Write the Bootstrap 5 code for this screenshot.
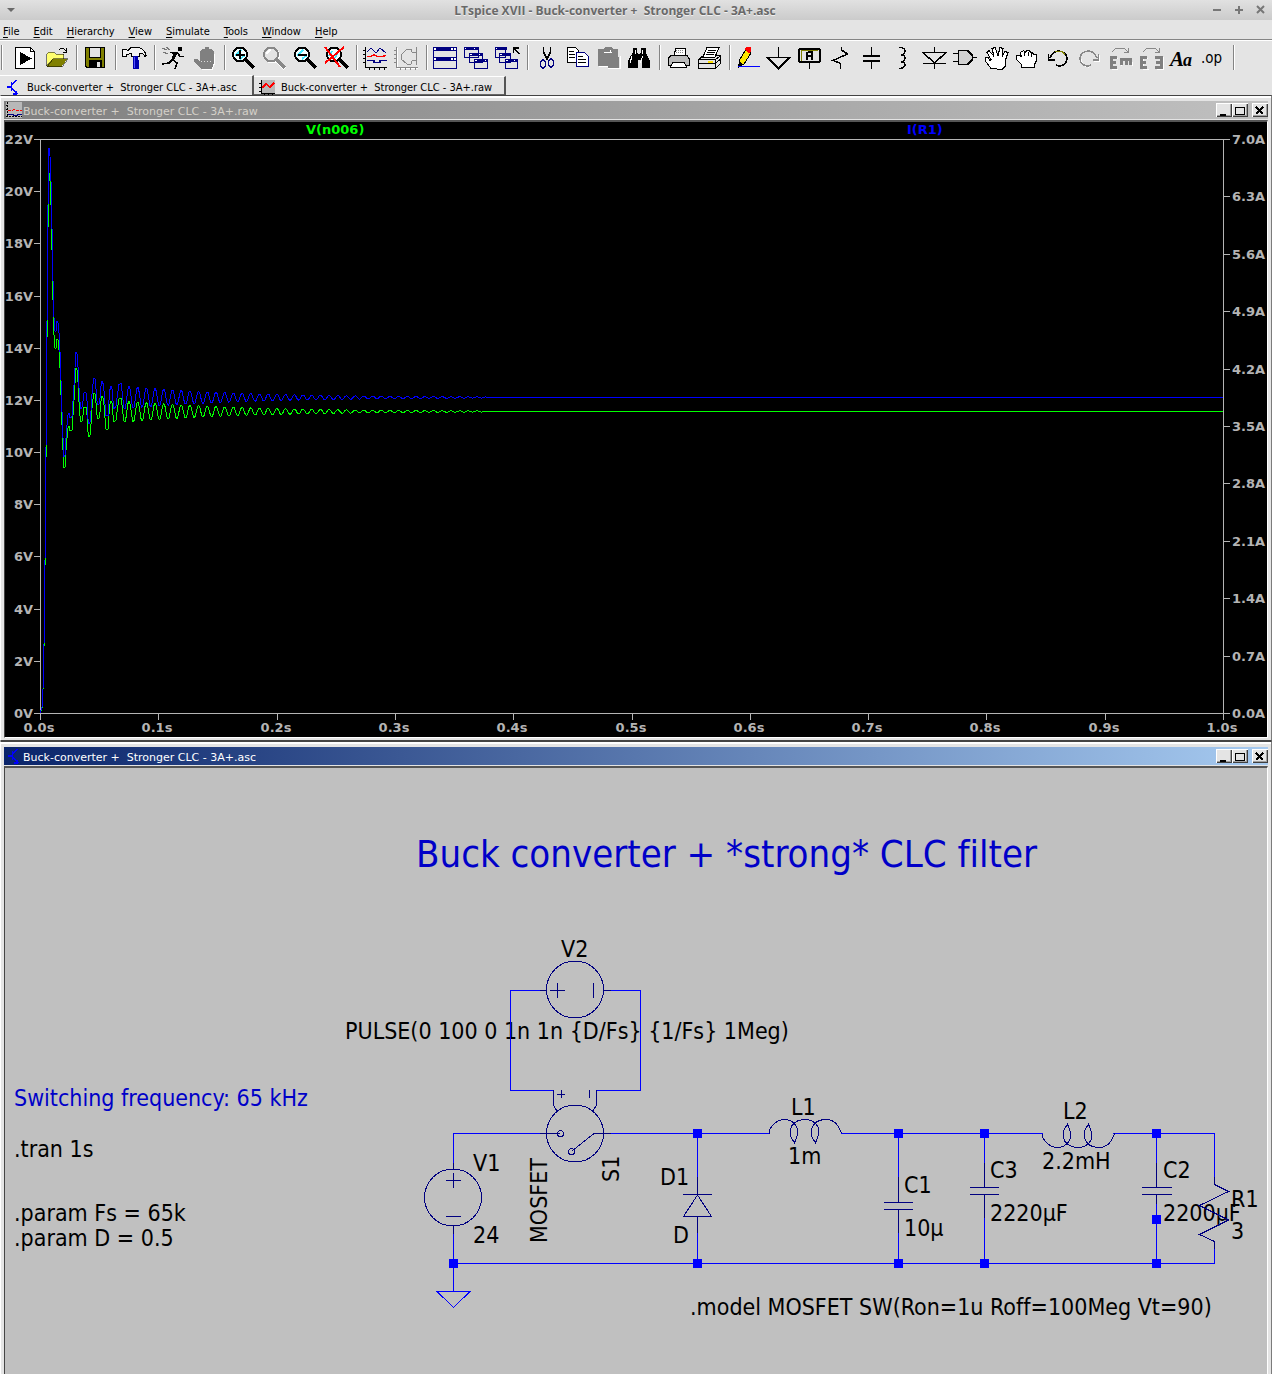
<!DOCTYPE html>
<html lang="en">
<head>
<meta charset="utf-8">
<meta name="viewport" content="width=device-width, initial-scale=1">
<title>LTspice XVII - Buck-converter + Stronger CLC - 3A+.asc</title>
<link rel="stylesheet" href="https://cdn.jsdelivr.net/npm/bootstrap@5.3.0/dist/css/bootstrap.min.css">
<style>
body{background:#e4e4e4;font-family:"DejaVu Sans Condensed","DejaVu Sans",sans-serif;font-size:11px;line-height:15px;color:#000;overflow-x:hidden}
button{border:0;background:none;padding:0;color:inherit}
.app-title{height:20px;padding-right:6px;background:linear-gradient(#e1e1e1,#cbcbcb);color:#696969;font:bold 12px/19px "Open Sans","Noto Sans",sans-serif;text-shadow:0 1px #f0f0f0}
.keep{white-space:pre}
.win-ctl{width:22px;height:19px;line-height:0}
.menu-line{height:19px;padding-left:3px;gap:14px}
.menu-line a{color:#000;text-decoration:none;line-height:23px}
.menu-line u{text-underline-offset:2px}
.tool-line{height:36px;border-top:1px solid #848484;box-shadow:inset 0 1px #fff;padding-left:1px}
.tool-line button{width:31px;height:35px;padding:6px 4px 5px 3px;line-height:0;flex:none}
.tool-line svg{width:24px;height:24px;shape-rendering:crispEdges;overflow:visible}
.tool-rule{width:8px;flex:none}
.tool-rule::before{content:"";display:block;width:2px;height:25px;margin:5px 0 0 4px;background:#848484;border-right:1px solid #fff}
.grip{width:9px}
.grip::before{margin-left:0}
.tab-line{height:20px}
.doc-tab{height:19px;padding:3px 0 0 5px;border-top:1px solid #fff;border-right:2px solid #555;display:flex;align-items:center;gap:6px}
.doc-tab.current{height:20px;width:254px}
.doc-tab.other{width:252px;margin-top:1px;box-shadow:inset 0 -1px #666}
.doc-tab svg{width:16px;height:16px;shape-rendering:crispEdges;flex:none}
.mdi{border:1px solid #fff;border-top-color:#444;border-right-color:#7b7b7b;border-bottom:1px solid #444;box-shadow:inset 0 2px #fff;padding:5px 3px 2px 3px}
.mdi-head{height:18px;padding-left:2px;font:11px/19px "DejaVu Sans",sans-serif}
.mdi-head span{padding:2px 0 0 1px}
.head-off{background:linear-gradient(90deg,#808080,#c0c0c0);color:#d4d0c8}
.head-on{background:linear-gradient(90deg,#0a246a,#a6caf0);color:#fff}
.mdi-head svg{width:16px;height:16px;shape-rendering:crispEdges}
.cap-btn{width:16px;height:14px;background:#e4e4e4!important;box-shadow:inset 1px 1px #fff,inset -1px -1px #404040,inset -2px -2px #a0a0a0;line-height:0}
.mdi-body{border:1px solid #fff;border-top:2px solid #555;border-left:1px solid #444;line-height:0;margin-top:1px}
.mdi-body svg{display:block;width:100%;height:auto}
.plot{background:#000;font:bold 13px "DejaVu Sans",sans-serif;fill:#b4b4b4}
.axis{stroke:#b4b4b4;fill:none;shape-rendering:crispEdges}
.trace{fill:none;stroke-width:1;shape-rendering:crispEdges}
.sheet{background:#c0c0c0;font-size:23px;font-variant-ligatures:none;fill:#000}
.wire{stroke:#0000ff;fill:none;shape-rendering:crispEdges}
.part{stroke:#000080;fill:none;shape-rendering:crispEdges}
.remark{fill:#0000c8}
.headline{font-size:38px}
</style>
</head>
<body class="d-flex flex-column min-vh-100">
<header>
<div class="app-title d-flex align-items-center">
<button class="win-ctl" aria-label="Window menu"><svg width="22" height="19"><path d="M7 7h8l-4 4z" fill="#696969"/></svg></button>
<div class="flex-grow-1 text-center keep ps-2">LTspice XVII - Buck-converter +  Stronger CLC - 3A+.asc</div>
<button class="win-ctl" aria-label="Minimize"><svg width="22" height="19"><path d="M13 9h8" stroke="#777" stroke-width="2"/></svg></button>
<button class="win-ctl" aria-label="Maximize"><svg width="22" height="19"><path d="M13 9h8M17 5v8" stroke="#777" stroke-width="2"/></svg></button>
<button class="win-ctl" aria-label="Close"><svg width="22" height="19"><path d="M13 5l7 7M20 5l-7 7" stroke="#777" stroke-width="2"/></svg></button>
</div>
<nav class="menu-line d-flex">
<a href="#"><u>F</u>ile</a><a href="#"><u>E</u>dit</a><a href="#"><u>H</u>ierarchy</a><a href="#"><u>V</u>iew</a><a href="#"><u>S</u>imulate</a><a href="#"><u>T</u>ools</a><a href="#"><u>W</u>indow</a><a href="#"><u>H</u>elp</a>
</nav>
<div class="tool-line d-flex" role="toolbar" aria-label="Main toolbar">
<span class="tool-rule grip"></span>
<button aria-label="Run"><svg viewBox="0 0 24 24"><path d="M2.500 1.500h15l4 4v17h-19z" fill="#fff" stroke="#000"/><path d="M17.500 1.500v4h4" fill="none" stroke="#000"/><path d="M7 6l12 6.500L7 19z"/></svg></button>
<button aria-label="Open"><svg viewBox="0 0 24 24"><path d="M2.500 20V8l2-2h5l2 2h8v5H9z" fill="#ffff70" stroke="#000" stroke-width=".5"/><path d="M2.500 20.500l6-8h15l-6 8z" fill="#808000" stroke="#000" stroke-width=".5"/><path d="M15 4q3-4 7 1M22.500 2v4h-4" fill="none" stroke="#000"/></svg></button>
<span class="tool-rule"></span>
<button aria-label="Save"><svg viewBox="0 0 24 24"><path d="M2.500 1.500h19v20H4l-1.500-1.500z" fill="#808000" stroke="#000"/><path d="M6.500 1.500h11v10h-11z" fill="#e4e4e4" stroke="#000"/><path d="M6 14h13v8H6z"/><path d="M14 16h3v5h-3z" fill="#e4e4e4"/></svg></button>
<span class="tool-rule"></span>
<button aria-label="Control panel"><svg viewBox="0 0 24 24"><path d="M.5 3.500H4l2 1 3-3h8q6 2 7 8l-1 1q-2-4-5-3l-1 3h-7l-1-3-4 1-1 2h-3z" fill="#f4f4f4" stroke="#000"/><path d="M11 10h5v3l1 2v8h-6z" fill="#0000b0"/><path d="M12.500 11v11" stroke="#55f"/></svg></button>
<span class="tool-rule"></span>
<button aria-label="Simulate"><svg viewBox="0 0 24 24"><path d="M17 1h4v4h-4z"/><path d="M9 6.500l8 1 2 3h4M16 6l-4 8 4 3-2 6M12 13l-4 4-7 1" fill="none" stroke="#000" stroke-width="1.500"/><path d="M15 6l-3 6" stroke="#000" stroke-width="3"/><path d="M1 2l5 2M2 6l5 2M5 1l4 3" stroke="#777"/></svg></button>
<button aria-label="Halt"><svg viewBox="0 0 24 24"><path d="M2 13h3l3 3V5l2-2h3V1h4v2h3l2 3v12l-2 5H10l-8-7z" fill="#808080"/><path d="M9 15.500h10" stroke="#ddd" stroke-dasharray="1 2"/><path d="M10 23.500h10l2-5V8" fill="none" stroke="#fff"/></svg></button>
<span class="tool-rule"></span>
<button aria-label="Zoom in"><svg viewBox="0 0 24 24"><circle cx="9" cy="8.500" r="7" fill="#f4ffff" stroke="#000" stroke-width="2"/><path d="M4 10l6-6M9 13l5-4" stroke="#40e8ff" stroke-width="2"/><path d="M4.500 8.500h9M9 4v9" stroke="#000" stroke-width="2"/><path d="M15 14l8 8" stroke="#000" stroke-width="3"/></svg></button>
<button aria-label="Pan"><svg viewBox="0 0 24 24"><circle cx="10" cy="9.500" r="7" fill="none" stroke="#fff" stroke-width="2"/><circle cx="9" cy="8.500" r="7" fill="#e4e4e4" stroke="#888" stroke-width="2"/><path d="M5 8q0-3 4-4" fill="none" stroke="#fff" stroke-width="2"/><path d="M15 15l8 8" stroke="#fff" stroke-width="4"/><path d="M15 14l8 8" stroke="#888" stroke-width="3"/></svg></button>
<button aria-label="Zoom out"><svg viewBox="0 0 24 24"><circle cx="9" cy="8.500" r="7" fill="#f4ffff" stroke="#000" stroke-width="2"/><path d="M4 10l6-6M9 13l5-4" stroke="#40e8ff" stroke-width="2"/><path d="M4.500 8.500h9" stroke="#000" stroke-width="2"/><path d="M15 14l8 8" stroke="#000" stroke-width="3"/></svg></button>
<button aria-label="Zoom full extents"><svg viewBox="0 0 24 24"><circle cx="10" cy="8.500" r="7" fill="#f4ffff" stroke="#000" stroke-width="2"/><path d="M8 5l-3 5M14 6l-3 6" stroke="#40e8ff" stroke-width="2"/><path d="M16 14l8 8" stroke="#000" stroke-width="3"/><path d="M1 1l15 20M20 1L1 17" stroke="#f00" stroke-width="2"/></svg></button>
<span class="tool-rule"></span>
<button aria-label="Autorange"><svg viewBox="0 0 24 24"><path d="M2.500 1v20.500H24M0 4.500h2M0 8.500h2M0 12.500h2M0 16.500h2M6.500 22v2M11.500 22v2M16.500 22v2M21.500 22v2" fill="none" stroke="#000"/><path d="M4 6l4-4 5 5 4-5 6 5" fill="none" stroke="#000080"/><path d="M4 10.500h4l3-2 3 2h5l4-1" fill="none" stroke="#f00" stroke-width="1.500"/><path d="M4 14.500h7v2h6v-2h7" fill="none" stroke="#000080" stroke-width="1.500"/></svg></button>
<button aria-label="Toggle grid"><svg viewBox="0 0 24 24"><g fill="none"><path d="M3.500 2v20.500H24" stroke="#fff"/><path d="M2.500 1v20.500H24M0 4.500h2M0 8.500h2M0 12.500h2M0 16.500h2M6.500 22v2M11.500 22v2M16.500 22v2M21.500 22v2M22.500 1v18M7 9l6-6h4l1 3 4 1M7 9v4l6 5h4l1-3 4-1" stroke="#888"/></g></svg></button>
<span class="tool-rule"></span>
<button aria-label="Tile windows"><svg viewBox="0 0 24 24"><path d="M.5 1.500h23v21H.5z" fill="#e4e4e4" stroke="#000080"/><path d="M0 1h24v4H0zM0 11h24v4H0z" fill="#000080"/><path d="M1 2.500h2M18 2.500h2M21 2.500h2M1 12.500h2M18 12.500h2M21 12.500h2" stroke="#fff" stroke-width="2"/></svg></button>
<button aria-label="Cascade windows"><svg viewBox="0 0 24 24"><g fill="#e4e4e4" stroke="#000080"><path d="M.5 1.500h14v10H.5zM5.500 7.500h13v9h-13zM10.500 13.500h13v9h-13z"/></g><path d="M0 1h15v3H0zM5 7h14v3H5zM10 13h14v3H10z" fill="#000080"/><path d="M1 2.500h1M10 2.500h1M6 8.500h2M15 8.500h1M11 14.500h2M21 14.500h1" stroke="#fff"/></svg></button>
<button aria-label="Close all windows"><svg viewBox="0 0 24 24"><g fill="#e4e4e4" stroke="#000080"><path d="M.5 1.500h10v10H.5zM4.500 7.500h11v9h-11zM10.500 13.500h12v9h-12z"/></g><path d="M0 1h12v3H0zM4 7h12v3H4zM10 13h13v3H10z" fill="#000080"/><path d="M1 2.500h1M5 8.500h2M11 14.500h2M19 14.500h1" stroke="#fff"/><path d="M18.500 7V2H24M19 2l5 6" fill="none" stroke="#000" stroke-width="1.500"/></svg></button>
<span class="tool-rule"></span>
<button aria-label="Cut"><svg viewBox="0 0 24 24"><path d="M9.500 1v5l4 8M16.500 1v5l-4 8" fill="none" stroke="#000" stroke-width="1.500"/><g fill="none" stroke="#000080" stroke-width="1.500"><ellipse cx="9" cy="18" rx="2.500" ry="4"/><ellipse cx="17" cy="17" rx="2.500" ry="4"/></g></svg></button>
<button aria-label="Copy"><svg viewBox="0 0 24 24"><path d="M2.500 1.500h8l3 3v12h-11z" fill="#fff" stroke="#000"/><path d="M4 5.500h5M4 8.500h6M4 11.500h6" stroke="#000"/><path d="M11.500 6.500h8l4 4v10h-12z" fill="#fff" stroke="#000080"/><path d="M13 10.500h5M13 13.500h8M13 16.500h8" stroke="#000"/></svg></button>
<button aria-label="Paste"><svg viewBox="0 0 24 24"><path d="M3 20.500h9v2h12V10" fill="none" stroke="#fff"/><path d="M2 3h5l2-2h6l2 2h5v6l1 3v10H12v-2H2z" fill="#808080"/><path d="M8 6.500h8M14 4v2" stroke="#fff"/></svg></button>
<button aria-label="Find"><svg viewBox="0 0 24 24"><path d="M6 2h4v4l2 3 2-3V2h5v5l4 8v7h-8v-8h-4v8H1v-7l5-9z"/><path d="M8 4v4M15.500 4v4M5 10l-2 7M15.500 10l-2 7" stroke="#fff"/></svg></button>
<span class="tool-rule"></span>
<button aria-label="Print"><svg viewBox="0 0 24 24"><path d="M8 9l2-7h9l1 8" fill="#fff" stroke="#000"/><path d="M5 9.500h16l2 3v7H2v-7z" fill="#bbb" stroke="#000"/><path d="M6.500 16.500h12l2 5h-16z" fill="#fff" stroke="#000"/><path d="M10 4.500h7M10 6.500h8" stroke="#888" stroke-dasharray="1 1"/></svg></button>
<button aria-label="Print setup"><svg viewBox="0 0 24 24"><path d="M1.500 13.500l5-4h17v8l-5 5h-17z" fill="#e4e4e4" stroke="#000"/><path d="M1.500 13.500h17v9M18 14l5-4M2 17.500h16l5-4" fill="none" stroke="#000"/><path d="M6 11l4-9.500h12l-4 9.500z" fill="#fff" stroke="#000"/><path d="M11 4.500h8M10 6.500h8M9 8.500h8" stroke="#000"/><path d="M11 15.500h5" stroke="#ffe000" stroke-width="2"/></svg></button>
<span class="tool-rule"></span>
<button aria-label="Wire"><svg viewBox="0 0 24 24"><path d="M3 15L10 3l5 4L8 18l-5 3z" fill="#ffe800" stroke="#000"/><path d="M10 1h5v5l-2 1-4-3z" fill="#f00"/><path d="M3 15l4 4-5 3z"/><path d="M2 20.500h22" stroke="#00f"/></svg></button>
<button aria-label="Ground"><svg viewBox="0 0 24 24"><path d="M11.500 1v10.500M.5 11.500h22l-11 11z" fill="none" stroke="#000" stroke-width="1.500"/></svg></button>
<button aria-label="Label net"><svg viewBox="0 0 24 24"><path d="M1 4l1-1h19l1 1v11l-1 1H2l-1-1z" fill="#e4e4e4" stroke="#000" stroke-width="2"/><path d="M3 14.500V4.500h17" fill="none" stroke="#808000"/><path d="M9 14V7l2-1h3v8M9 10h5M11.500 17v6" fill="none" stroke="#000" stroke-width="1.500"/></svg></button>
<button aria-label="Resistor"><svg viewBox="0 0 24 24"><path d="M12.500 1v3l6 4L4 14.500l7.500 3V23" fill="none" stroke="#000" stroke-width="1.500"/></svg></button>
<button aria-label="Capacitor"><svg viewBox="0 0 24 24"><path d="M11.500 1v9M11.500 15v8" stroke="#000" stroke-width="1.500"/><path d="M3 10h17M3 15h17" stroke="#000" stroke-width="2"/></svg></button>
<button aria-label="Inductor"><svg viewBox="0 0 24 24"><path d="M8 1.500q6 0 6 3.500t-4 4q4 0 4 3t-4 4q4 0 4 3t-6 3.500" fill="none" stroke="#000" stroke-width="1.500"/></svg></button>
<button aria-label="Diode"><svg viewBox="0 0 24 24"><path d="M12.500 1v5M12.500 17v6M1 6.500h23L12.500 17z" fill="none" stroke="#000" stroke-width="1.500"/><path d="M1 17.500h23" stroke="#000" stroke-width="1.500"/></svg></button>
<button aria-label="Component"><svg viewBox="0 0 24 24"><path d="M5.500 4.500h9l5 5v4l-5 5h-9z" fill="#d0d0d0" stroke="#000" stroke-width="1.500"/><path d="M0 7.500h5M0 15.500h5M19 11.500h5" stroke="#000" stroke-width="1.500"/></svg></button>
<button aria-label="Move"><svg viewBox="0 0 24 24"><path d="M7 22.500l-6-8v-3h3l2 3 1-1-4-7 2-2 5 6-2-8 3-1 3 8 2-8 3 1-1 8 3-5 3 1-3 9v5l-3 3z" fill="#fff" stroke="#000"/></svg></button>
<button aria-label="Drag"><svg viewBox="0 0 24 24"><path d="M6.500 21.500v-3l-5-5v-4h3l2 1-1-4 3-2 2 2 1-2h3l1 2h2l1 2h3v6l-2 4v3z" fill="#fff" stroke="#000"/><path d="M9.500 6v4M13.500 6v4M16.500 7v4" stroke="#000"/></svg></button>
<button aria-label="Undo"><svg viewBox="0 0 24 24"><path d="M2.500 8v6h6M4 12q3-7 9-7 8 1 8 8-1 7-8 7l-3-1" fill="none" stroke="#000" stroke-width="1.500"/><path d="M9 5.500h7l3 3" fill="none" stroke="#808000"/></svg></button>
<button aria-label="Redo"><svg viewBox="0 0 24 24"><g fill="none" stroke-width="1.500"><path d="M22.500 9v6h-6M12 21q-8-1-8-8" stroke="#fff"/><path d="M21.500 8v6h-6M20 12q-3-7-9-7-8 1-8 8 1 7 8 7l3-1" stroke="#888"/></g></svg></button>
<button aria-label="Rotate"><svg viewBox="0 0 24 24"><path d="M4 6l4-4h8l4 4M20.500 2v4h-5" fill="none" stroke="#888"/><path d="M10 12.500H4v11h6M13 20v-4M24 20v-4" fill="none" stroke="#fff"/><path d="M9 11.500H3.500v10H9M2 16.500h6M12 13h12M13.500 13v6M18 13v6M22.500 13v6" fill="none" stroke="#808080" stroke-width="3"/></svg></button>
<button aria-label="Mirror"><svg viewBox="0 0 24 24"><path d="M4 6l4-4h8l4 4M20.500 2v4h-5" fill="none" stroke="#888"/><path d="M9 12.500H4v11h6M24.500 11v12h-7" fill="none" stroke="#fff"/><path d="M8 11.500H2.500v10H8M2 16.500h5M16 11.500h6.500v10H16M17 16.500h6" fill="none" stroke="#808080" stroke-width="3"/></svg></button>
<button aria-label="Text"><svg viewBox="0 0 24 24"><text x="0" y="20" font-family="Liberation Serif,serif" font-weight="bold" font-style="italic" font-size="21">A</text><text x="13" y="20" font-family="Liberation Serif,serif" font-weight="bold" font-style="italic" font-size="18">a</text></svg></button>
<button aria-label="SPICE directive"><svg viewBox="0 0 24 24"><text x="0" y="17" font-family="DejaVu Sans Condensed,DejaVu Sans,sans-serif" font-size="15">.op</text></svg></button>
<span class="tool-rule"></span>
</div>
<div class="tab-line d-flex" role="tablist">
<button class="doc-tab current" role="tab" aria-selected="true"><svg viewBox="0 0 16 16"><path d="M2 8h4M6.500 3v9M7 6l4-5M7 9l5 6M11 12v3h-3" stroke="#00f" fill="none" stroke-width="1.500"/></svg><span class="keep">Buck-converter +  Stronger CLC - 3A+.asc</span></button>
<button class="doc-tab other" role="tab" aria-selected="false"><svg viewBox="0 0 16 16"><path d="M2 0h14v14H2z" fill="#b8b8b8"/><path d="M2.500 0v13.500H16M0 3.500h2M0 7.500h2M0 11.500h2M5.500 14v2M9.500 14v2M13.500 14v2" stroke="#000" fill="none"/><path d="M3 8l4-4 4 3 4-4" stroke="#f00" fill="none" stroke-width="1.500"/></svg><span class="keep">Buck-converter +  Stronger CLC - 3A+.raw</span></button>
</div>
</header>
<main class="flex-grow-1 d-flex flex-column">
<section class="mdi">
<div class="mdi-head head-off d-flex align-items-center">
<svg viewBox="0 0 16 16"><path d="M0 0h16v16H0z" fill="#b8b8b8"/><path d="M1.500 0v14M0 3.500h2M0 7.500h2M0 14.500h16" stroke="#000" stroke-dasharray="2 1"/><path d="M2 8.500h4l2-1 3 1h5" stroke="#f00" fill="none" stroke-dasharray="3 1"/><path d="M2 12.500h5v1h4v-1h5" stroke="#000080" fill="none"/></svg>
<span class="flex-grow-1 keep">Buck-converter +  Stronger CLC - 3A+.raw</span>
<button class="cap-btn" aria-label="Minimize plot"><svg viewBox="0 0 16 14"><path d="M4 10.500h6" stroke="#000" stroke-width="2"/></svg></button>
<button class="cap-btn" aria-label="Maximize plot"><svg viewBox="0 0 16 14"><path d="M3.500 3v7.500h9V3M3 3.500h10" stroke="#000" fill="none"/></svg></button>
<button class="cap-btn ms-1" aria-label="Close plot"><svg viewBox="0 0 16 14"><path d="M4 3l7 7M11 3l-7 7" stroke="#000" stroke-width="2"/></svg></button>
</div>
<div class="mdi-body"><svg class="plot" id="plot" viewBox="5 122 1262 615" role="img" aria-label="Waveform plot">
<path class="axis" d="M40.500 139.500h1183v574h-1183z"/>
<g id="ticks"></g>
<text x="306" y="134" fill="#00ff00">V(n006)</text><text x="907" y="134" fill="#0000ff">I(R1)</text>
<polyline class="trace" id="volts" stroke="#00ff00"/><polyline class="trace" id="amps" stroke="#0000ff"/>
</svg></div>
</section>
<section class="mdi border-bottom-0 pb-0 flex-grow-1">
<div class="mdi-head head-on d-flex align-items-center">
<svg viewBox="0 0 16 16"><path d="M2 8h4M6.500 3v9M7 6l4-5M7 9l5 6M11 12v3h-3" stroke="#00f" fill="none" stroke-width="1.500"/></svg>
<span class="flex-grow-1 keep">Buck-converter +  Stronger CLC - 3A+.asc</span>
<button class="cap-btn" aria-label="Minimize schematic"><svg viewBox="0 0 16 14"><path d="M4 10.500h6" stroke="#000" stroke-width="2"/></svg></button>
<button class="cap-btn" aria-label="Maximize schematic"><svg viewBox="0 0 16 14"><path d="M3.500 3v7.500h9V3M3 3.500h10" stroke="#000" fill="none"/></svg></button>
<button class="cap-btn ms-1" aria-label="Close schematic"><svg viewBox="0 0 16 14"><path d="M4 3l7 7M11 3l-7 7" stroke="#000" stroke-width="2"/></svg></button>
</div>
<div class="mdi-body border-bottom-0"><svg class="sheet" viewBox="5 768 1262 606" role="img" aria-label="Buck converter schematic">
<text class="remark headline" x="416" y="867">Buck converter + *strong* CLC filter</text>
<text class="remark" x="14" y="1106">Switching frequency: 65 kHz</text>
<text x="14" y="1157">.tran 1s</text><text x="14" y="1221">.param Fs = 65k</text><text x="14" y="1246">.param D = 0.5</text>
<text x="690" y="1315">.model MOSFET SW(Ron=1u Roff=100Meg Vt=90)</text>
<text x="345" y="1039">PULSE(0 100 0 1n 1n {D/Fs} {1/Fs} 1Meg)</text>
<text x="561" y="957">V2</text><text x="473" y="1171">V1</text><text x="473" y="1243">24</text>
<text x="660" y="1185">D1</text><text x="673" y="1243">D</text><text x="791" y="1115">L1</text><text x="788" y="1164">1m</text>
<text transform="translate(547 1243) rotate(-90)">MOSFET</text><text transform="translate(619 1182) rotate(-90)">S1</text>
<text x="904" y="1193">C1</text><text x="904" y="1236">10µ</text><text x="990" y="1178">C3</text><text x="990" y="1221">2220µF</text>
<text x="1063" y="1119">L2</text><text x="1042" y="1169">2.2mH</text><text x="1163" y="1178">C2</text><text x="1163" y="1221">2200µF</text>
<text x="1231" y="1207">R1</text><text x="1231" y="1239">3</text>
<g class="wire">
<path d="M540 990.500h-29.500v100h43M611 990.500h29.500v100h-44M540 1133.500h-86.500V1163M453.500 1234v57M453.500 1263.500h761V1249M611 1133.500h158M841 1133.500h202M1113 1133.500h101.500V1177M697.500 1133v44M697.500 1233v30M898.500 1133v44M898.500 1233v30M984.500 1133v30M984.500 1218v45M1156.500 1133v30M1156.500 1204v59"/>
<path d="M437 1291.500h33l-16.500 16z"/>
</g>
<g class="part">
<circle cx="575" cy="989.500" r="28.500"/><path d="M540 990.500h6M604 990.500h7M550 990.500h15M557.500 983v15M593.500 983v15"/>
<circle cx="575" cy="1133.500" r="28.500"/><path d="M553.500 1090v15l4 7M596.500 1090v15l-4 7M557 1094.500h8M561.500 1090v8M589.500 1090v8M540 1133.500h20M572 1151l22-17.500h17"/><circle cx="560.500" cy="1133.500" r="3"/><circle cx="571.500" cy="1151.500" r="3"/>
<circle cx="453" cy="1197.500" r="28.500"/><path d="M453.500 1163v6M453.500 1226v8M446 1180.500h15M453.500 1173v15M446 1216.500h15"/>
<path d="M697.500 1177v17M683 1194.500h29M697.500 1195l-14 21.500h28zM697.500 1217v16"/>
<path id="coil" d="M769.500 1133.500v-4Q776 1119.500 784 1119.500C793 1119.500 800 1127 797 1136L794.500 1143 791 1137C787 1123 799 1119.500 805 1119.500C811 1119.500 822 1124 818 1136L815.500 1143 812 1137C809 1123 819 1119.500 826 1119.500Q837 1119.500 841.500 1133.500"/>
<use href="#coil" transform="translate(273 2267) scale(1 -1)"/>
<path d="M898.500 1177v25M884 1202.500h29M884 1209.500h29M898.500 1209v24M984.500 1163v24M970 1187.500h29M970 1194.500h29M984.500 1194v24M1156.500 1163v24M1142 1187.500h30M1142 1194.500h30M1156.500 1194v10"/>
<path d="M1214.500 1177v7.500l14 7-29 14 29 14.500-29 14.500 15 7V1249"/>
</g>
<path fill="#00f" d="M693 1129h9v9h-9zM894 1129h9v9h-9zM980 1129h9v9h-9zM1152 1129h9v9h-9zM449 1259h9v9h-9zM693 1259h9v9h-9zM894 1259h9v9h-9zM980 1259h9v9h-9zM1152 1259h9v9h-9zM1152 1215h9v9h-9z"/>
</svg></div>
</section>
</main>
<script src="https://cdn.jsdelivr.net/npm/bootstrap@5.3.0/dist/js/bootstrap.bundle.min.js"></script>
<script>
// Axis ticks and labels: volts on the left, amps on the right, seconds below.
let marks = '', labels = '';
for (let i = 0; i <= 11; i++) {
  const y = Math.floor(713.5 - i * 52.18);
  marks += `M34 ${y + .5}h6`;
  labels += `<text x="33" y="${y + 5}" text-anchor="end">${i * 2}V</text>`;
}
for (let i = 0; i <= 10; i++) {
  const y = Math.floor(713.5 - i * 57.4), x = Math.round(40 + i * 118.3);
  marks += `M1224 ${y + .5}h6M${x + .5} 714v6`;
  labels += `<text x="1232" y="${y + 5}">${(i * .7).toFixed(1)}A</text>`;
  labels += `<text x="${x - 1}" y="732" text-anchor="middle">${(i / 10).toFixed(1)}s</text>`;
}
document.getElementById('ticks').innerHTML = `<path class="axis" d="${marks}"/>${labels}`;

// Start-up transient, then a decaying ripple around the settled output.
const v = [[40,713],[42,708],[43,690],[44,648],[45,568],[46,460],[47,340],[48,228],[49,173],[50,181],[51,205],[52,250],[53,300],[54,335],[55,348],[56,348],[57,339],[58,340],[59,350],[60,368],[61,395],[62,425],[63,450],[64,468],[65,467],[66,450],[67,438],[68,428],[69,426],[70,431],[72,430],[73,415],[74,400],[75,383],[76,368],[77,370],[78,382],[79,402],[80,416],[81,422],[82,421],[83,415],[84,407],[86,407],[87,415],[88,432],[89,437],[90,435],[91,424],[92,408],[93,399],[94,393],[95,394],[96,403],[97,415],[98,419],[99,418],[100,412],[101,401],[102,396],[103,398],[104,405],[105,418],[106,429],[108,429],[109,414],[110,404],[111,401],[112,403],[113,415],[114,422],[116,420],[117,412],[118,405],[119,399],[121,398],[122,405],[123,414]];
for (let x = 124; x <= 1223; x++) v.push([x, 411.5 - 10.5 * Math.exp((130 - x) / 120) * Math.cos((x - 129) / 8.7 * 2 * Math.PI)]);
const draw = (id, k) => document.getElementById(id).setAttribute('points', v.map(([x, y]) => `${x},${(713.5 - (713.5 - y) * k).toFixed(1)}`).join(' '));
draw('volts', 1);
draw('amps', 1.0464);
</script>
</body>
</html>
